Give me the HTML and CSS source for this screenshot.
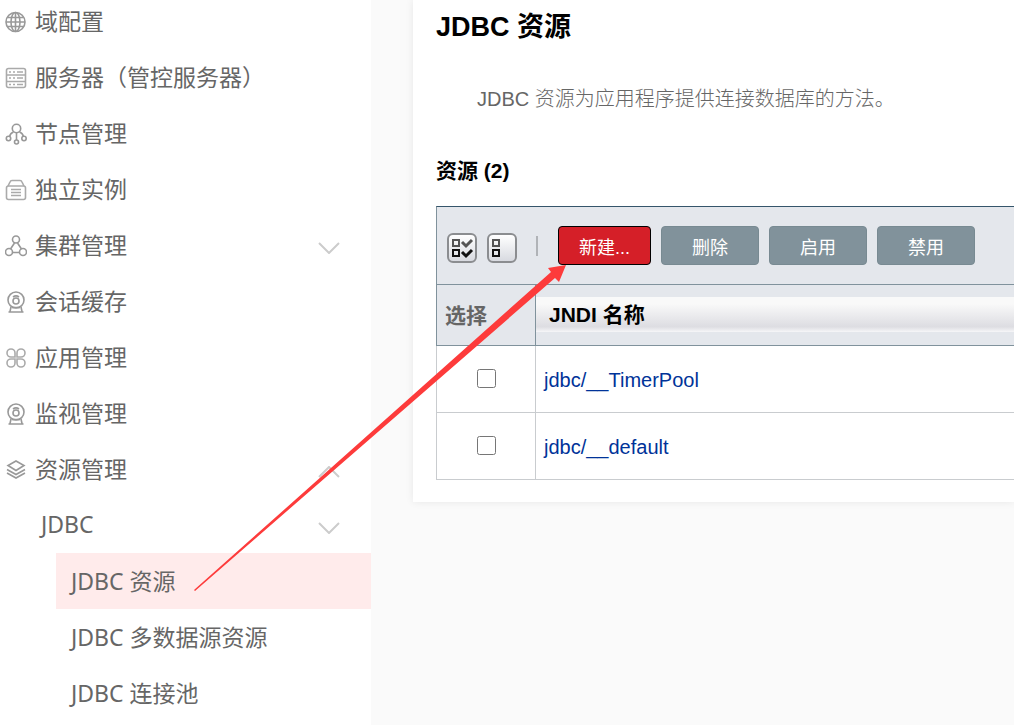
FILE: index.html
```
<!DOCTYPE html>
<html lang="zh-CN">
<head>
    <meta charset="UTF-8">
    <meta name="viewport" content="width=device-width, initial-scale=1.0">
    <title>JDBC 资源</title>
    <link rel="stylesheet" href="styles.css">
</head>
<body>
    <div class="layout">
        <nav class="sidebar">
            <ul class="menu">
                <li><a href="#">
                    <svg class="icon" viewBox="0 0 22 22"><circle cx="10.500" cy="11" r="9.5"/><ellipse cx="10.500" cy="11" rx="4.5" ry="9.5"/><path d="M10.500 1.500v19M1 11h19M2.500 6.500h16M2.500 15.500h16"/></svg>
                    <span>域配置</span></a></li>
                <li><a href="#">
                    <svg class="icon light" viewBox="0 0 22 22"><rect x="1.500" y="1.500" width="19" height="19" rx="2"/><path d="M2 8h18M2 14.500h18M4 5h2M8 5h2M4 11h2M8 11h2M4 17.500h2M8 17.500h2M12 5h6M12 11h6M12 17.500h6"/></svg>
                    <span>服务器（管控服务器）</span></a></li>
                <li><a href="#">
                    <svg class="icon" viewBox="0 0 22 22"><circle cx="11.500" cy="5.500" r="4.200"/><circle cx="3.500" cy="15.500" r="2.200"/><circle cx="19" cy="15.500" r="2.200"/><circle cx="11.500" cy="19" r="2"/><path d="M11.500 10v7M8.500 9q-3 1-4 4.500M14.500 9q3 1 4 4.500"/></svg>
                    <span>节点管理</span></a></li>
                <li><a href="#">
                    <svg class="icon light" viewBox="0 0 22 22"><rect x="1.500" y="7" width="19" height="13.500" rx="2"/><path d="M3 7l2-4q.5-1.500 2-1.500h8q1.500 0 2 1.500l2 4M6 10.500h10M6 13.500h10M6 16.500h10"/></svg>
                    <span>独立实例</span></a></li>
                <li><a href="#">
                    <svg class="icon" viewBox="0 0 22 22"><circle cx="11" cy="4.500" r="3.500"/><circle cx="4" cy="17" r="3.500"/><circle cx="18" cy="17" r="3.500"/><path d="M9.500 8l-4 6M12.500 8l4 6M7.500 17.500h7"/></svg>
                    <span>集群管理</span>
                    <svg class="chevron" viewBox="0 0 22 12"><path d="M1 1l10 10L21 1"/></svg></a></li>
                <li><a href="#">
                    <svg class="icon" viewBox="0 0 22 22"><circle cx="11" cy="9" r="8"/><circle cx="11" cy="10" r="3"/><path d="M8 6a5 5 0 0 1 6 0M6 16l-1 4.500M16 16l1 4.500M3.500 21h15M7 16.500h8"/></svg>
                    <span>会话缓存</span></a></li>
                <li><a href="#">
                    <svg class="icon light" viewBox="0 0 22 22"><path d="M10 10H6a4 4 0 1 1 4-4zM12 10V6a4 4 0 1 1 4 4zM10 12v4a4 4 0 1 1-4-4zM12 12h4a4 4 0 1 1-4 4z"/></svg>
                    <span>应用管理</span></a></li>
                <li><a href="#">
                    <svg class="icon" viewBox="0 0 22 22"><circle cx="11" cy="9" r="8"/><circle cx="11" cy="10" r="3"/><path d="M8 6a5 5 0 0 1 6 0M6 16l-1 4.500M16 16l1 4.500M3.500 21h15M7 16.500h8"/></svg>
                    <span>监视管理</span></a></li>
                <li><a href="#">
                    <svg class="icon" viewBox="0 0 22 22"><path d="M11 2l8 4.500L11 11.500 3 6.500zM2 10.500l9 5 9-5M2 14l9 5 9-5"/></svg>
                    <span>资源管理</span>
                    <svg class="chevron" viewBox="0 0 22 12"><path d="M1 11L11 1l10 10"/></svg></a>
                    <ul class="submenu">
                        <li><a href="#"><span>JDBC</span>
                            <svg class="chevron" viewBox="0 0 22 12"><path d="M1 1l10 10L21 1"/></svg></a>
                            <ul class="leaf">
                                <li><a href="#" class="active"><span>JDBC 资源</span></a></li>
                                <li><a href="#"><span>JDBC 多数据源资源</span></a></li>
                                <li><a href="#"><span>JDBC 连接池</span></a></li>
                            </ul>
                        </li>
                    </ul>
                </li>
            </ul>
        </nav>
        <main class="content">
            <h1>JDBC 资源</h1>
            <p class="help">JDBC 资源为应用程序提供连接数据库的方法。</p>
            <h2>资源 (2)</h2>
            <div class="toolbar">
                <button type="button" class="icon-btn" aria-label="全选">
                    <svg viewBox="0 0 26 26"><path d="M4 5h6v6H4z" class="soft"/><path d="M4 15h6v6H4z"/><path class="tick soft" d="M13 7l4 4 6-6"/><path class="tick" d="M13 17l4 4 6-6"/></svg>
                </button>
                <button type="button" class="icon-btn" aria-label="取消全选">
                    <svg viewBox="0 0 26 26"><path d="M4 5h6v6H4z" class="soft"/><path d="M4 15h6v6H4z"/></svg>
                </button>
                <span class="divider"></span>
                <button type="button" class="btn primary">新建...</button>
                <button type="button" class="btn">删除</button>
                <button type="button" class="btn">启用</button>
                <button type="button" class="btn">禁用</button>
            </div>
            <table class="resources">
                <thead>
                    <tr>
                        <th class="select">选择</th>
                        <th class="name"><div>JNDI 名称</div></th>
                    </tr>
                </thead>
                <tbody>
                    <tr>
                        <td class="select"><input type="checkbox" aria-label="jdbc/__TimerPool"></td>
                        <td><a href="#">jdbc/__TimerPool</a></td>
                    </tr>
                    <tr>
                        <td class="select"><input type="checkbox" aria-label="jdbc/__default"></td>
                        <td><a href="#">jdbc/__default</a></td>
                    </tr>
                </tbody>
            </table>
        </main>
    </div>
    <svg class="arrow" viewBox="0 0 372 326"><path d="M0 325L357 7l-3-4 18-3-7 17-4-4L1 326z"/></svg>
</body>
</html>
```
FILE: styles.css
```
* {
    box-sizing: border-box;
}

body {
    margin: 0;
    background-color: #fafafa;
    font-family: "Liberation Sans", Arial, "Noto Sans CJK SC", sans-serif;
    font-size: 20px;
    overflow: hidden;
}

a {
    color: #003399;
    text-decoration: none;
}

ul {
    list-style: none;
    margin: 0;
    padding: 0;
}

.layout {
    display: flex;
    align-items: flex-start;
    gap: 42px;
    height: 100vh;
}

/* left menu, scrolled down a little */
.sidebar {
    flex: 0 0 371px;
    height: 100vh;
    overflow: hidden;
    background-color: #fff;
    font-family: "Noto Sans", "Noto Sans CJK SC", sans-serif;
    font-size: 23px;
}

.menu {
    margin-top: -7px;
}

.menu a {
    display: flex;
    align-items: center;
    height: 56px;
    padding: 0 31px 0 5px;
    color: #666;
}

.menu span {
    padding-bottom: 2px;
}

.icon {
    width: 22px;
    height: 22px;
    margin: 2px 8px 0 0;
    fill: none;
    stroke: #999;
    stroke-width: 1.6;
}

.icon.light {
    stroke: #aaa;
}

.chevron {
    width: 22px;
    height: 12px;
    margin: 5px 0 0 auto;
    fill: none;
    stroke: #ccc;
    stroke-width: 2;
}

.menu .submenu a {
    padding-left: 41px;
}

.menu .leaf a {
    margin-left: 56px;
    padding-left: 15px;
}

.menu .leaf .active {
    background-color: #ffebeb;
}

.content {
    flex: 1;
    padding: 7px 0 22px 23px;
    background-color: #fff;
    box-shadow: 0 0 8px rgba(0, 0, 0, 0.08);
}

h1 {
    margin: 0;
    font-size: 27px;
    line-height: 40px;
}

.help {
    margin: 36px 0 0 41px;
    line-height: 32px;
    font-weight: 300;
    color: #666;
}

h2 {
    margin: 40px 0 19px;
    font-size: 21px;
    line-height: 32px;
}

.toolbar {
    display: flex;
    align-items: center;
    gap: 10px;
    height: 78px;
    padding-left: 10px;
    background-color: #e4e7ec;
    border-top: 1px solid #35556b;
    border-left: 1px solid #80929c;
}

.icon-btn {
    width: 30px;
    height: 30px;
    margin-top: 4px;
    padding: 0;
    border: 2px solid #8b8d90;
    border-radius: 6px;
    background: linear-gradient(#fff, #d8dae0);
}

.icon-btn svg {
    display: block;
    width: 26px;
    height: 26px;
    fill: none;
    stroke: #111;
    stroke-width: 2;
}

.icon-btn .tick {
    stroke-width: 3;
}

.icon-btn .soft {
    stroke: #555;
}

.divider {
    width: 2px;
    height: 20px;
    margin: 0 10px 0 9px;
    background-color: #b0b3b7;
}

.btn {
    height: 39px;
    padding: 0 30px;
    border: 1px solid #788a92;
    border-radius: 4px;
    background-color: #81929b;
    color: #fff;
    font-family: inherit;
    font-size: 18px;
}

.btn.primary {
    padding: 0 20px;
    border-color: #000;
    background-color: #d51f28;
}

.resources {
    width: 100%;
    border-collapse: collapse;
}

th {
    height: 61px;
    padding: 0 0 2px;
    background-color: #e4e7ec;
    border: 1px solid #80929c;
    border-right: none;
    font-size: 21px;
    text-align: left;
}

th.select {
    width: 99px;
    padding-left: 8px;
    color: #666;
}

th.name div {
    height: 35px;
    padding-left: 13px;
    line-height: 35px;
    background: linear-gradient(#f9f9f9 20%, #dddde2 85%, #f6f6f8);
}

td {
    height: 67px;
    padding: 2px 8px 0;
    border: 1px solid #c9cccf;
    border-right: none;
}

td.select {
    padding: 0 8px 3px;
    text-align: center;
}

td input {
    width: 19px;
    height: 19px;
    margin: 0;
    vertical-align: middle;
}

/* pointer from the menu entry to the new button */
.arrow {
    position: absolute;
    left: 194px;
    top: 265px;
    width: 372px;
    height: 326px;
    fill: #fd3b3b;
    pointer-events: none;
}
```
